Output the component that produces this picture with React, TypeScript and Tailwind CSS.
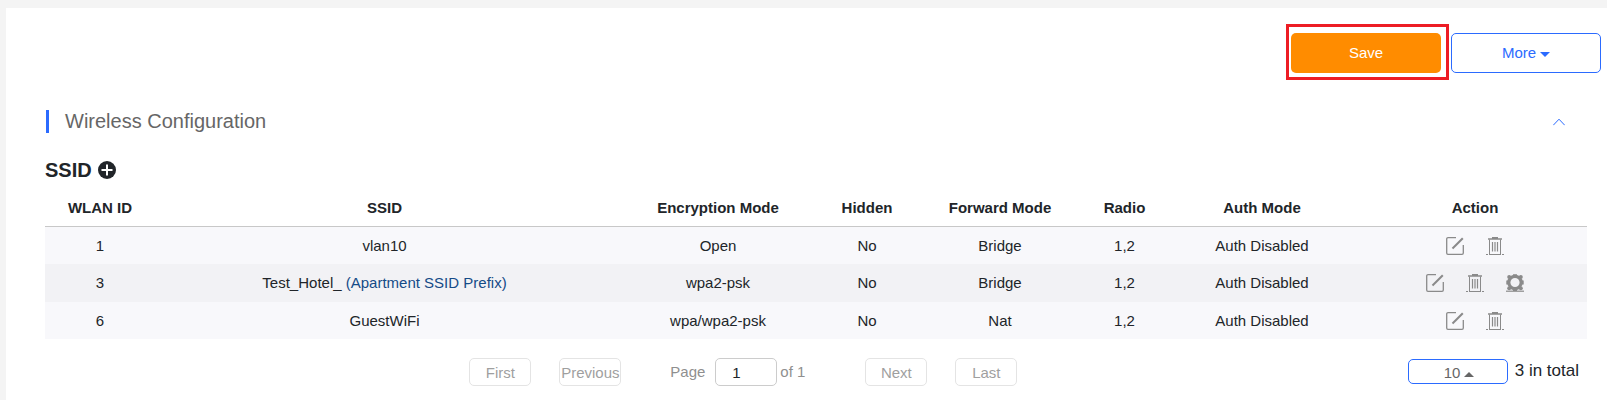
/**
 * Wireless configuration page - SSID list with paging
 */

import { ReactNode } from 'react';

interface Ssid {
  wlanId: number;
  name: string;
  note?: string;
  encryption: string;
  hidden: boolean;
  forwardMode: string;
  radio: string;
  authMode: string;
  hasSettings?: boolean;
}

const ssids: Ssid[] = [
  { wlanId: 1, name: 'vlan10', encryption: 'Open', hidden: false, forwardMode: 'Bridge', radio: '1,2', authMode: 'Auth Disabled' },
  {
    wlanId: 3,
    name: 'Test_Hotel_',
    note: '(Apartment SSID Prefix)',
    encryption: 'wpa2-psk',
    hidden: false,
    forwardMode: 'Bridge',
    radio: '1,2',
    authMode: 'Auth Disabled',
    hasSettings: true,
  },
  { wlanId: 6, name: 'GuestWiFi', encryption: 'wpa/wpa2-psk', hidden: false, forwardMode: 'Nat', radio: '1,2', authMode: 'Auth Disabled' },
];

const columns = [
  { label: 'WLAN ID', width: 'w-[110px]' },
  { label: 'SSID', width: '' },
  { label: 'Encryption Mode', width: 'w-[208px]' },
  { label: 'Hidden', width: 'w-[90px]' },
  { label: 'Forward Mode', width: 'w-[176px]' },
  { label: 'Radio', width: 'w-[73px]' },
  { label: 'Auth Mode', width: 'w-[202px]' },
  { label: 'Action', width: 'w-[224px]' },
];

function PlusCircleIcon() {
  return (
    <svg width="18" height="18" viewBox="0 0 18 18" aria-hidden="true">
      <circle cx="9" cy="9" r="9" fill="#212529" />
      <path d="M9 3.5v11M3.5 9h11" stroke="white" strokeWidth="2" />
    </svg>
  );
}

function EditIcon() {
  return (
    <svg width="18" height="18" viewBox="0 0 18 18" fill="none" stroke="#8a8a8a" aria-hidden="true">
      <path d="M10 .7H2A1.300 1.300 0 0 0 .7 2v14A1.300 1.300 0 0 0 2 17.300h14a1.300 1.300 0 0 0 1.300-1.300V8" strokeWidth="1.300" />
      <path d="M6.500 11.500 16.800 1.200" strokeWidth="2" />
    </svg>
  );
}

function TrashIcon() {
  return (
    <svg width="18" height="18" viewBox="0 0 18 18" fill="none" stroke="#8a8a8a" aria-hidden="true">
      <path d="M6 .5h6M2 2h14" strokeWidth="1.300" />
      <path d="M3.500 2.500v14.500M14.500 2.500v14.500" />
      <path d="M6.500 5v9.500M9 5v9.500M11.500 5v9.500" strokeWidth="1.200" />
      <path d="M0 17.500h2M3 17.500h12M16 17.500h2" />
    </svg>
  );
}

function GearIcon() {
  return (
    <svg width="18" height="18" viewBox="0 0 18 18" fill="none" aria-hidden="true">
      <circle cx="9" cy="8.500" r="6.200" stroke="#8a8a8a" strokeWidth="3.200" />
      <g fill="#8a8a8a">
        <circle cx="3.200" cy="3" r="2" />
        <circle cx="14.800" cy="3" r="2" />
        <circle cx="3.200" cy="14.200" r="2" />
        <circle cx="14.800" cy="14.200" r="2" />
        <path d="M7 .3h4v2H7zM.3 6.500h2v4h-2zM15.700 6.500h2v4h-2zM7 15h4v2H7z" />
        <path d="M0 16.600h18v1.200H0z" />
      </g>
    </svg>
  );
}

function IconButton({ label, children }: { label: string; children: ReactNode }) {
  return (
    <button type="button" aria-label={label} className="cursor-pointer">
      {children}
    </button>
  );
}

function PageButton({ children }: { children: ReactNode }) {
  return (
    <button
      type="button"
      disabled
      className="flex h-7 w-[62px] items-center justify-center rounded-[5px] border border-[#e4e4e4] pt-px text-[#9f9f9f]"
    >
      {children}
    </button>
  );
}

function SsidRow({ ssid }: { ssid: Ssid }) {
  return (
    <tr className="h-[37px] bg-[#f8f8fb] even:h-[38px] even:bg-[#f2f2f5]">
      <td>{ssid.wlanId}</td>
      <td>
        {ssid.name}
        {ssid.note && <span className="text-[#154b87]"> {ssid.note}</span>}
      </td>
      <td>{ssid.encryption}</td>
      <td>{ssid.hidden ? 'Yes' : 'No'}</td>
      <td>{ssid.forwardMode}</td>
      <td>{ssid.radio}</td>
      <td>{ssid.authMode}</td>
      <td>
        <div className="flex items-center justify-center gap-[22px]">
          <IconButton label="Edit">
            <EditIcon />
          </IconButton>
          <IconButton label="Delete">
            <TrashIcon />
          </IconButton>
          {ssid.hasSettings && (
            <IconButton label="Settings">
              <GearIcon />
            </IconButton>
          )}
        </div>
      </td>
    </tr>
  );
}

export default function App() {
  return (
    <div className="min-h-screen bg-[#f4f4f4] pt-2 pl-1.5 font-['Liberation_Sans',Arial,sans-serif] text-[15px] leading-5 text-[#212529]">
      <main className="min-h-[calc(100vh-8px)] bg-white">
        {/* Toolbar */}
        <div className="flex justify-end gap-2.5 pt-[25px] pr-1.5">
          <div className="relative">
            <button type="button" className="h-10 w-[150px] rounded-[5px] bg-[#ff8c00] pb-px text-white">
              Save
            </button>
            <span className="pointer-events-none absolute -top-[9px] -right-2 -bottom-[7px] -left-[5px] border-3 border-[#ed1c24]" />
          </div>
          <button
            type="button"
            className="flex h-10 w-[150px] items-center justify-center gap-1 rounded-[5px] border border-[#2b6bff] pb-px text-[#2b6bff]"
          >
            More
            <svg width="10" height="5" viewBox="0 0 10 5" className="mt-1" aria-hidden="true">
              <path d="M0 0h10L5 5z" fill="currentColor" />
            </svg>
          </button>
        </div>

        <section className="pt-[37px] pr-5 pl-[39px]">
          {/* Section header */}
          <div className="flex items-center justify-between pr-[22px] pl-px">
            <h2 className="border-l-3 border-[#2b6bff] pl-4 text-xl leading-[23px] text-[#666]">Wireless Configuration</h2>
            <button type="button" aria-label="Collapse" className="text-[#2b6bff]">
              <svg width="12" height="8" viewBox="0 0 12 8" fill="none" stroke="currentColor" aria-hidden="true">
                <path d="M.3 7.200 6 1.200 11.700 7.200" />
              </svg>
            </button>
          </div>

          <div className="mt-[25px] flex items-center gap-1.5">
            <h3 className="text-xl leading-6 font-bold">SSID</h3>
            <button type="button" aria-label="Add SSID">
              <PlusCircleIcon />
            </button>
          </div>

          {/* SSID table */}
          <table className="mt-2 w-full table-fixed border-separate border-spacing-0 text-center">
            <thead>
              <tr className="h-[37px]">
                {columns.map((column) => (
                  <th key={column.label} className={`border-b border-[#c8c8c8] font-bold ${column.width}`}>
                    {column.label}
                  </th>
                ))}
              </tr>
            </thead>
            <tbody>
              {ssids.map((ssid) => (
                <SsidRow key={ssid.wlanId} ssid={ssid} />
              ))}
            </tbody>
          </table>

          {/* Pagination */}
          <div className="flex items-start pt-[19px] pr-2">
            <nav aria-label="Pagination" className="flex flex-1 items-center justify-center pl-[34px]">
              <div className="flex gap-7">
                <PageButton>First</PageButton>
                <PageButton>Previous</PageButton>
              </div>
              <div className="flex w-[244px] items-center pl-[49px] text-[#8f8f8f]">
                <label htmlFor="page" className="w-[45px]">
                  Page
                </label>
                <input
                  id="page"
                  type="text"
                  defaultValue="1"
                  className="h-7 w-[62px] rounded-[5px] border border-[#ccc] pr-5 text-center text-[#212529]"
                />
                <span className="pl-[3px]">of 1</span>
              </div>
              <div className="flex gap-7">
                <PageButton>Next</PageButton>
                <PageButton>Last</PageButton>
              </div>
            </nav>
            <div className="flex items-start gap-[7px] pt-px">
              <div className="relative">
                <select
                  aria-label="Rows per page"
                  defaultValue="10"
                  className="block h-[25px] w-[100px] appearance-none rounded-[5px] border border-[#2b6bff] bg-white pt-0.5 pl-[35px] text-[#666]"
                >
                  <option>10</option>
                  <option>20</option>
                  <option>50</option>
                </select>
                <svg width="10" height="5" viewBox="0 0 10 5" className="pointer-events-none absolute top-[13px] left-14" aria-hidden="true">
                  <path d="M0 5h10L5 0z" fill="#666" />
                </svg>
              </div>
              <span className="text-[17px] leading-6">3 in total</span>
            </div>
          </div>
        </section>
      </main>
    </div>
  );
}
